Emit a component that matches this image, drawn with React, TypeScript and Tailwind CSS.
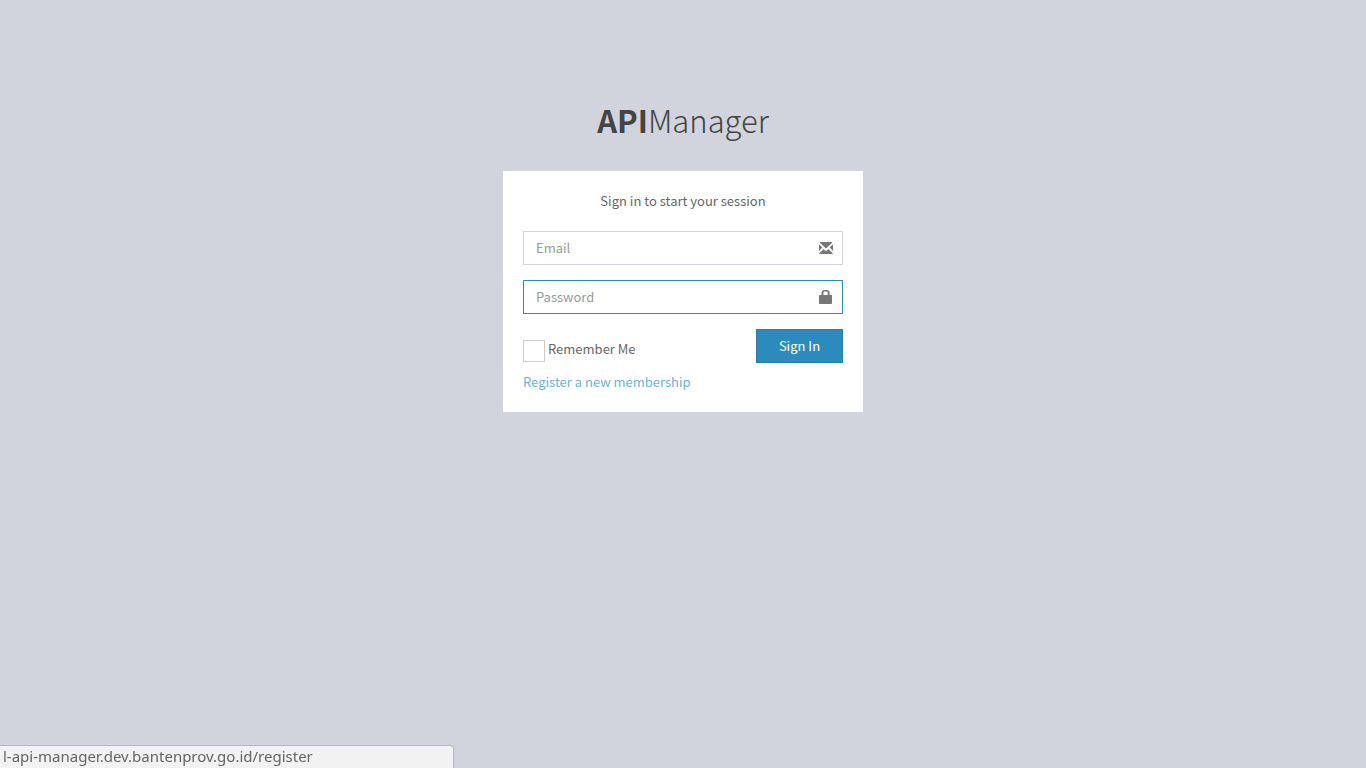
import { useState } from "react";

function EnvelopeIcon() {
  return (
    <svg viewBox="0 0 14 14" className="h-3.5 w-3.5" fill="#777777" aria-hidden="true">
      <path d="M1 1H13L13.4 1.4L7.8 6.7Q7 7.4 6.2 6.7L0.6 1.4Z" />
      <path d="M0 3.3L3.3 6.6L0 9.9Z" />
      <path d="M14 3.3L10.7 6.6L14 9.9Z" />
      <path d="M4.5 8.1L6 9.5Q7 10.2 8 9.5L9.5 8.1L13.7 12.3V13H0.3V12.3Z" />
    </svg>
  );
}

function LockIcon() {
  return (
    <svg viewBox="0 0 14 14" className="h-3.5 w-3.5" fill="#777777" aria-hidden="true">
      <path
        fillRule="evenodd"
        d="M5 0H8Q10.6 0.2 10.6 2.8V5H12.2Q13 5 13 5.8V13.2Q13 14 12.2 14H0.8Q0 14 0 13.2V5.8Q0 5 0.8 5H2.5V2.8Q2.5 0.2 5 0ZM5.4 1.6Q4.4 1.7 4.4 2.9V5H8.7V2.9Q8.7 1.7 7.6 1.6Z"
      />
    </svg>
  );
}

const inputClass =
  "block h-[34px] w-full border bg-white pr-10 pb-0.5 pl-3 text-[13px] leading-5 text-[#555555] outline-none placeholder:text-[#999999] placeholder:opacity-100";

export default function App() {
  const [remember, setRemember] = useState(false);

  return (
    <div className="flex min-h-screen flex-col items-center bg-[#d1d4dd] px-4 pt-24 font-['Noto_Sans_CJK_SC',sans-serif] text-[13px] leading-5 text-[#666666]">
      <main className="w-full max-w-[360px]">
        <h1 className="mb-[27px] text-center text-[31px] leading-[48px] font-light text-[#444444]">
          <a href="#home">
            <b className="font-bold">API</b>Manager
          </a>
        </h1>
        <section className="bg-white p-5">
          <p className="mb-5 text-center">Sign in to start your session</p>
          <form onSubmit={(e) => e.preventDefault()}>
            <div className="relative mb-[15px]">
              <input type="email" aria-label="Email" placeholder="Email" className={`${inputClass} border-[#d2d2dd]`} />
              <span className="pointer-events-none absolute inset-y-0 right-2.5 flex items-center">
                <EnvelopeIcon />
              </span>
            </div>
            <div className="relative mb-[15px]">
              <input type="password" aria-label="Password" placeholder="Password" className={`${inputClass} border-[#2c8bb8]`} />
              <span className="pointer-events-none absolute inset-y-0 right-2.5 flex items-center">
                <LockIcon />
              </span>
            </div>
            <div className="mb-[9px] flex items-start justify-between">
              <label className="mt-2.5 flex cursor-pointer items-start gap-[3px]">
                <input
                  type="checkbox"
                  checked={remember}
                  onChange={(e) => setRemember(e.target.checked)}
                  className="mt-px h-[22px] w-[22px] appearance-none border border-[#cfcbc8] bg-white checked:bg-[#2c8bbc]"
                />
                <span>Remember Me</span>
              </label>
              <button type="submit" className="h-[34px] w-[87px] border border-[#2a7da9] bg-[#2c8bbc] text-white">
                Sign In
              </button>
            </div>
          </form>
          <a href="#register" className="block text-[#6cb2d6]">
            Register a new membership
          </a>
        </section>
      </main>
      <div className="fixed bottom-0 left-0 h-[23px] w-[454px] rounded-tr border-t border-r border-[#b5b6c2] bg-[#f2f2f2] pl-[3px] font-['Noto_Sans',sans-serif] text-[15px] leading-5 text-[#646464]">
        l-api-manager.dev.bantenprov.go.id/register
      </div>
    </div>
  );
}
